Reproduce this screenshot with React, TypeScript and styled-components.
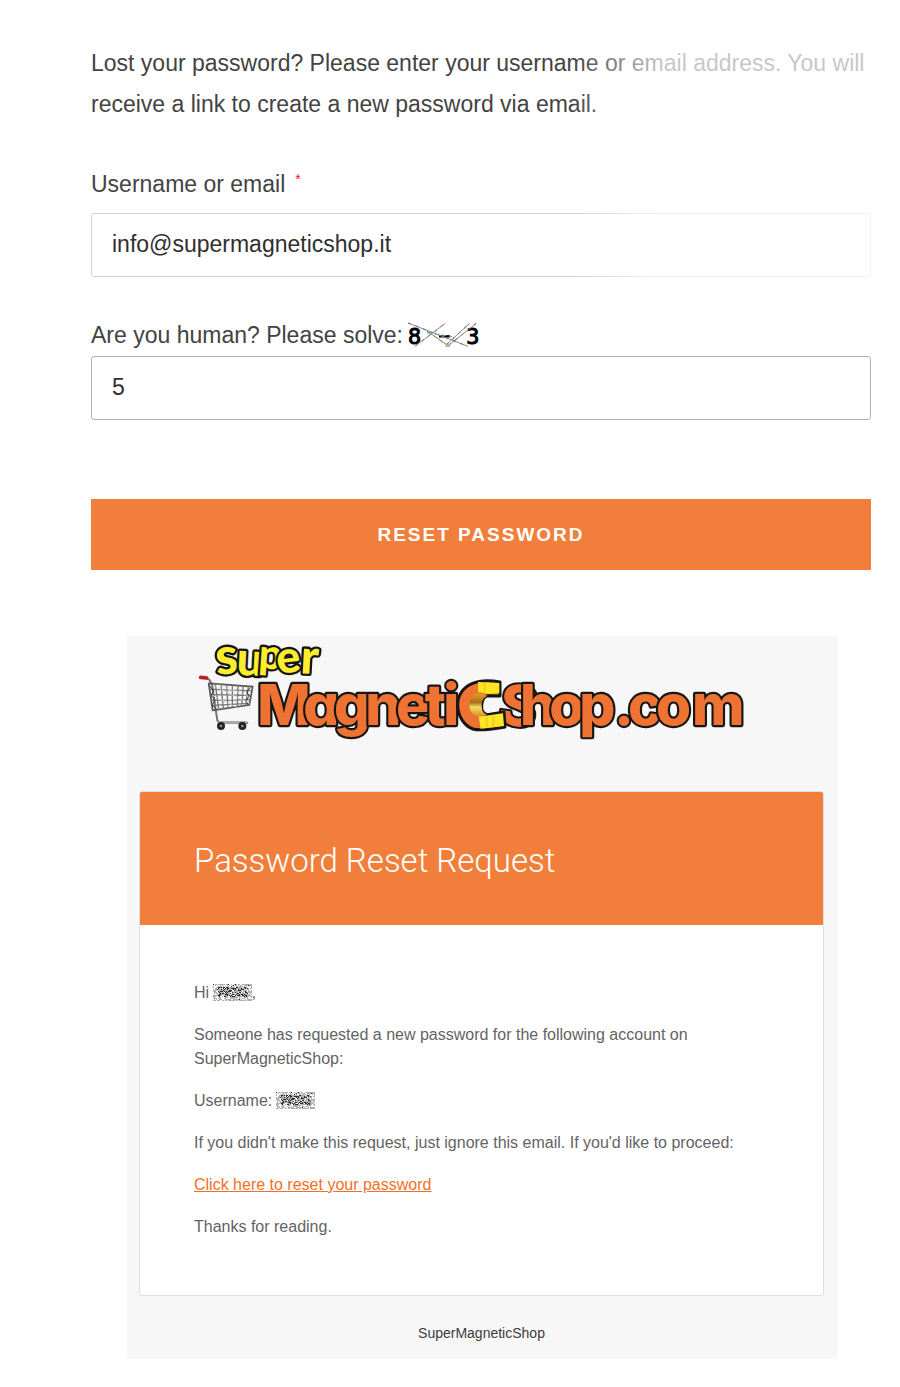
import React from 'react';
import styled, { createGlobalStyle } from 'styled-components';

const sans = '"Liberation Sans", Arial, sans-serif';
const orange = '#f17f3b';

const GlobalStyle = createGlobalStyle`
  *, *::before, *::after { box-sizing: border-box; }
  body { margin: 0; background: #fff; color: #434343; font-family: ${sans}; }
`;

const Page = styled.main`
  display: flex;
  flex-direction: column;
  gap: 66px;
  padding: 43px 29px 28px 91px;
`;

const ResetForm = styled.form`
  position: relative;
  display: flex;
  flex-direction: column;
  font-size: 23px;
`;

const Fade = styled.div`
  position: absolute;
  top: -43px;
  right: -29px;
  left: 480px;
  height: 290px;
  background: linear-gradient(90deg, rgba(255, 255, 255, 0), rgba(255, 255, 255, 0.7) 90px);
  pointer-events: none;
`;

const Intro = styled.p`
  margin: 0 0 44px;
  line-height: 41px;
`;

const Field = styled.div<{ $space: number }>`
  display: flex;
  flex-direction: column;
  margin-bottom: ${({ $space }) => $space}px;
`;

const Label = styled.label<{ $height: number }>`
  display: flex;
  align-items: flex-start;
  gap: 4px;
  height: ${({ $height }) => $height}px;
  line-height: 30px;
`;

const Required = styled.span`
  padding: 0 6px;
  color: #ff1020;
  font-size: 14px;
  line-height: 20px;
`;

const CaptchaImage = styled.svg`
  width: 74px;
  height: 30px;
  overflow: visible;
`;

const TextInput = styled.input<{ $border: string }>`
  width: 100%;
  height: 64px;
  padding: 0 20px 2px;
  border: 1px solid ${({ $border }) => $border};
  border-radius: 3px;
  background: #fff;
  color: #2f2f2f;
  font: 23px ${sans};
  outline: none;
`;

const SubmitButton = styled.button`
  height: 71px;
  border: 0;
  background: ${orange};
  color: #fff;
  font: 700 19px ${sans};
  letter-spacing: 2px;
  text-transform: uppercase;
`;

const Email = styled.article`
  display: flex;
  flex-direction: column;
  margin: 0 33px 0 36px;
  padding: 0 14px 0 12px;
  background: #f7f7f7;
`;

const Brand = styled.header`
  height: 155px;
  padding-left: 51px;
`;

const LogoArt = styled.svg`
  display: block;
  width: 570px;
  height: 110px;
`;

const LogoText = styled.text`
  font-weight: 900;
  paint-order: stroke;
  stroke: #161616;
  stroke-linejoin: round;
`;

const LogoWord = styled(LogoText)`
  font-family: Inter, sans-serif;
  font-feature-settings: 'cv11';
  font-size: 170px;
  font-weight: 800;
`;

const Card = styled.section`
  border: 1px solid #dedede;
  border-radius: 3px;
  background: #fff;
  overflow: hidden;
`;

const CardTitle = styled.h1`
  margin: 0;
  padding: 44px 54px 40px;
  background: ${orange};
  color: #fff;
  font: 300 33px/49px Roboto, sans-serif;
`;

const CardBody = styled.div`
  display: flex;
  flex-direction: column;
  gap: 18px;
  padding: 56px 54px 56px;
  color: #636363;
  font-size: 16px;
  line-height: 24px;
`;

const Line = styled.p`
  margin: 0;
`;

const ResetLink = styled.a`
  color: #f0702a;
`;

const Scribble = styled.svg`
  width: 39px;
  height: 17px;
  margin-left: -1px;
  vertical-align: -3px;
`;

const Footer = styled.footer`
  padding: 29px 0 18px;
  color: #3c3c3c;
  font-size: 14px;
  line-height: 16px;
  text-align: center;
`;

/* Speckles that cover a private name: dense and dark in the middle, grey at the rim. */
function specks(dark: boolean) {
  let seed = 17;
  let d = '';
  for (let y = 0; y < 17; y += 1) {
    for (let x = 0; x < 39; x += 1) {
      seed = (seed * 16807) % 2147483647;
      const core = x > 4 && x < 35 && y > 2 && y < 13;
      const limit = dark ? (core ? 0.32 : 0.03) : 0.55;
      const value = dark ? seed / 2147483647 : 1 - seed / 2147483647;
      if (value < limit) d += `M${x} ${y}h1v1h-1z`;
    }
  }
  return d;
}

const greySpecks = specks(false);
const darkSpecks = specks(true);

function HiddenName() {
  return (
    <Scribble viewBox="0 0 39 17" role="img" aria-label="Hidden name">
      <path d={greySpecks} fill="#b0b0b0" />
      <path d={darkSpecks} fill="#2c2c2c" />
    </Scribble>
  );
}

function Captcha() {
  return (
    <CaptchaImage viewBox="0 -6 222 90">
      <g fill="#000" stroke="#000" strokeWidth="3" fontFamily="DejaVu Sans" fontSize="62">
        <text x="3" y="65">8</text>
        <path d="M96 43h33" strokeWidth="7" />
        <text x="178" y="65">3</text>
      </g>
      <g fill="none" strokeWidth="3">
        <path d="M3 3 183 73M25 72 115 4M60 27l62 43M118 68l70-64M125 70 208 4" stroke="#9b8a68" />
        <path d="M3 3 183 73M25 72 115 4M118 68l70-64M125 70 208 4" stroke="#5068d8" strokeDasharray="9 15" />
        <path d="M60 27 122 70M60 32l75 12" stroke="#70a070" strokeDasharray="14 8" />
        <path d="M117 66h10v7h-10z" stroke="#a0a080" />
      </g>
    </CaptchaImage>
  );
}

function Cart() {
  return (
    <g fill="none" strokeLinecap="round" strokeLinejoin="round">
      <path d="M46 126l12 5 8 14 12 82 4 26 6 8h84" stroke="#777" strokeWidth="6" />
      <path d="M56 142l132 10-10 55-110 16z" stroke="#555" strokeWidth="5" />
      <path
        d="M60 160l126 4M63 176l120 2M65 193l117-2M68 208l111-6M76 144l10 76M93 145l7 73M110 147l4 69M127 148v66M144 149l-2 62M160 150l-5 60M175 151l-8 57"
        stroke="#777"
        strokeWidth="4"
      />
      <path d="M59 150l12 14-8 14 12 14-8 14 10 12M180 156l-10 12 8 12-10 14 6 12" stroke="#333" strokeWidth="3" />
      <path d="M72 150l106 52M84 146l90 34M70 180l70 34" stroke="#ddd" strokeWidth="2" />
      <path d="M88 259h80" stroke="#aaa" strokeWidth="8" />
      <path d="M32 124l18 2" stroke="#b8202a" strokeWidth="11" />
      <g fill="#999" stroke="#222" strokeWidth="8">
        <circle cx="93" cy="270" r="8" />
        <circle cx="157" cy="270" r="8" />
      </g>
    </g>
  );
}

function Magnet() {
  return (
    <g>
      <path
        d="M930 138C900 132 866 134 846 143 818 155 802 180 803 209c1 32 19 60 46 70 24 7 60 0 96-6l-3-45-50 8c-14-3-18-14-17-27 1-16 7-28 18-30l37 1z"
        fill="#ee7231"
        stroke="#161616"
        strokeWidth="9"
        strokeLinejoin="round"
      />
      <path d="M864 138l64 3v31l-35 2-29-7z" fill="#fde725" />
      <path d="M864 171l29 8c-14 5-18 17-18 30 0 14 5 24 17 27l-26 6c-18-5-28-17-28-36 0-18 10-30 26-35z" fill="url(#gold)" />
      <path d="M866 242l73-10 3 38-70 8z" fill="#fde725" />
      <path d="M884 140v32M890 244v30M910 240v34" stroke="#f2c91e" strokeWidth="5" />
    </g>
  );
}

function Logo() {
  return (
    <LogoArt viewBox="0 0 1710 330" role="img" aria-label="Super MagneticShop.com">
      <defs>
        <linearGradient id="gold" x1="0" y1="0" x2="0" y2="1">
          <stop offset="0" stopColor="#e8a22a" />
          <stop offset="0.4" stopColor="#a8701c" />
          <stop offset="0.6" stopColor="#f6dc62" />
          <stop offset="1" stopColor="#d88c20" />
        </linearGradient>
      </defs>
      <Cart />
      <LogoText fontFamily="Lato" fontSize="140" fill="#fdee2d" strokeWidth="14">
        <tspan x="80" y="116" rotate="-5" fontSize="154">s</tspan>
        <tspan x="138" y="116" rotate="3" fontSize="140">u</tspan>
        <tspan x="204" y="96" rotate="4" fontSize="124">p</tspan>
        <tspan x="264" y="114" rotate="-7" fontSize="134">e</tspan>
        <tspan x="330" y="112" rotate="3" fontSize="144">r</tspan>
      </LogoText>
      <g fill="#ee7231" strokeWidth="13">
        <LogoWord x="202 340 432 526 618 704 760" y="268">Magneti</LogoWord>
        <LogoWord x="922" y="262" rotate="8">S</LogoWord>
        <Magnet />
        <LogoWord x="990 1078 1168" y="268">hop</LogoWord>
        <LogoWord x="1272 1314 1398 1506" y="268">.com</LogoWord>
      </g>
    </LogoArt>
  );
}

export default function App() {
  return (
    <>
      <GlobalStyle />
      <Page>
        <ResetForm>
          <Intro>
            Lost your password? Please enter your username or email address. You will receive a link to create a new
            password via email.
          </Intro>
          <Field $space={43}>
            <Label htmlFor="user" $height={44}>
              Username or email
              <Required>*</Required>
            </Label>
            <TextInput id="user" $border="#d2d2d2" defaultValue="info@supermagneticshop.it" />
          </Field>
          <Field $space={79}>
            <Label htmlFor="answer" $height={36}>
              Are you human? Please solve:
              <Captcha />
            </Label>
            <TextInput id="answer" $border="#b0b0b0" defaultValue="5" />
          </Field>
          <SubmitButton type="button">Reset password</SubmitButton>
          <Fade />
        </ResetForm>
        <Email>
          <Brand>
            <Logo />
          </Brand>
          <Card>
            <CardTitle>Password Reset Request</CardTitle>
            <CardBody>
              <Line>
                Hi <HiddenName />,
              </Line>
              <Line>Someone has requested a new password for the following account on SuperMagneticShop:</Line>
              <Line>
                Username: <HiddenName />
              </Line>
              <Line>If you didn't make this request, just ignore this email. If you'd like to proceed:</Line>
              <Line>
                <ResetLink href="#reset">Click here to reset your password</ResetLink>
              </Line>
              <Line>Thanks for reading.</Line>
            </CardBody>
          </Card>
          <Footer>SuperMagneticShop</Footer>
        </Email>
      </Page>
    </>
  );
}
